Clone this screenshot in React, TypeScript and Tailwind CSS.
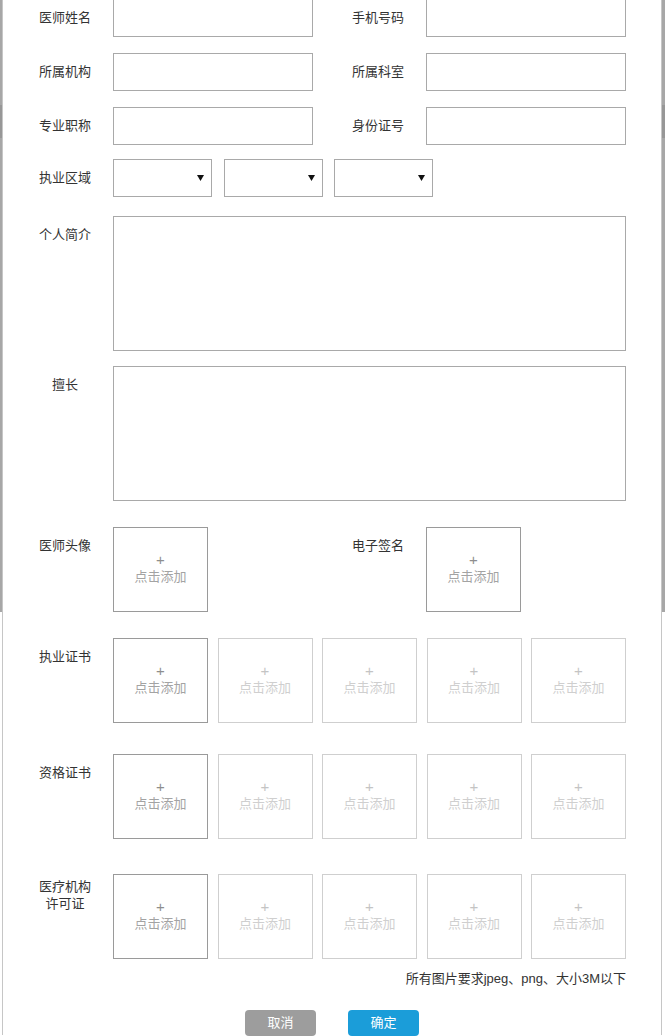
import React from "react";

const font = "font-['Liberation_Sans','Noto_Sans_CJK_SC',sans-serif]";

function Label({ children, twoLine }: { children: React.ReactNode; twoLine?: boolean }) {
  return (
    <div
      className={
        "w-[96px] shrink-0 text-center text-[13px] text-[#333] " +
        (twoLine ? "pt-[4px] leading-[17px]" : "leading-[38px]")
      }
    >
      {children}
    </div>
  );
}

function TextInput() {
  return <div className="h-[38px] w-[200px] border border-[#a9a9a9] bg-white" />;
}

function Select() {
  return (
    <div className="flex h-[38px] w-[99px] items-center justify-end border border-[#a9a9a9] bg-white pr-[7px]">
      <svg width="7" height="6" viewBox="0 0 7 6">
        <polygon points="0,0 7,0 3.5,6" fill="#111" />
      </svg>
    </div>
  );
}

function UploadBox({ active }: { active?: boolean }) {
  return (
    <div
      className={
        "flex h-[85px] w-[95px] flex-col items-center justify-center border pb-[3px] text-[13px] leading-[17px] " +
        (active ? "border-[#9a9a9a] text-[#a3a3a3]" : "border-[#cfcfcf] text-[#cfcfcf]")
      }
    >
      <span className={"text-[15px] " + (active ? "text-[#8e8e8e]" : "text-[#c4c4c4]")}>+</span>
      <span>点击添加</span>
    </div>
  );
}

function UploadRow({ label, twoLine, mt }: { label: React.ReactNode; twoLine?: boolean; mt: string }) {
  return (
    <div className={"flex " + mt}>
      <Label twoLine={twoLine}>{label}</Label>
      <div className="flex w-[513px] justify-between">
        <UploadBox active />
        <UploadBox />
        <UploadBox />
        <UploadBox />
        <UploadBox />
      </div>
    </div>
  );
}

export default function App() {
  return (
    <div className={"relative h-[1036px] w-[665px] overflow-hidden bg-white " + font}>
      {/* dimmed page behind the dialog */}
      <div className="absolute left-0 right-0 top-0 h-[612px] bg-[#a7a7a7]">
        <div className="absolute left-0 right-0 top-[105px] h-[33px] bg-[#979797]" />
      </div>

      <div className="relative ml-[2px] h-full w-[660px] border-x border-[#c6c6c6] bg-white">
        <div className="-mt-px pl-[14px]">
          {/* text fields */}
          {[
            ["医师姓名", "手机号码"],
            ["所属机构", "所属科室"],
            ["专业职称", "身份证号"],
          ].map(([a, b], i) => (
            <div key={a} className={"flex " + (i > 0 ? "mt-[16px]" : "")}>
              <div className="flex w-[313px]">
                <Label>{a}</Label>
                <TextInput />
              </div>
              <div className="flex w-[313px]">
                <Label>{b}</Label>
                <TextInput />
              </div>
            </div>
          ))}

          {/* region */}
          <div className="mt-[14px] flex">
            <Label>执业区域</Label>
            <div className="flex gap-[11.5px]">
              <Select />
              <Select />
              <Select />
            </div>
          </div>

          {/* intro */}
          <div className="mt-[19px] flex">
            <Label>个人简介</Label>
            <div className="h-[135px] w-[513px] border border-[#a9a9a9]" />
          </div>

          <div className="mt-[15px] flex">
            <Label>擅长</Label>
            <div className="h-[135px] w-[513px] border border-[#a9a9a9]" />
          </div>

          {/* avatar and signature */}
          <div className="mt-[26px] flex">
            <div className="flex w-[313px]">
              <Label>医师头像</Label>
              <UploadBox active />
            </div>
            <div className="flex w-[313px]">
              <Label>电子签名</Label>
              <UploadBox active />
            </div>
          </div>

          <UploadRow label="执业证书" mt="mt-[26px]" />
          <UploadRow label="资格证书" mt="mt-[31px]" />
          <UploadRow
            twoLine
            label={
              <>
                医疗机构
                <br />
                许可证
              </>
            }
            mt="mt-[35px]"
          />

          <div className="mt-[10px] w-[609px] text-right text-[13px] leading-[20px] text-[#333]">
            所有图片要求jpeg、png、大小3M以下
          </div>
        </div>

        <div className="mt-[21px] flex justify-center gap-[32px]">
          <button className="h-[26px] w-[71px] rounded-[4px] bg-[#9d9d9d] text-[13px] text-white">取消</button>
          <button className="h-[26px] w-[71px] rounded-[4px] bg-[#1b9dd9] text-[13px] text-white">确定</button>
        </div>
      </div>
    </div>
  );
}
